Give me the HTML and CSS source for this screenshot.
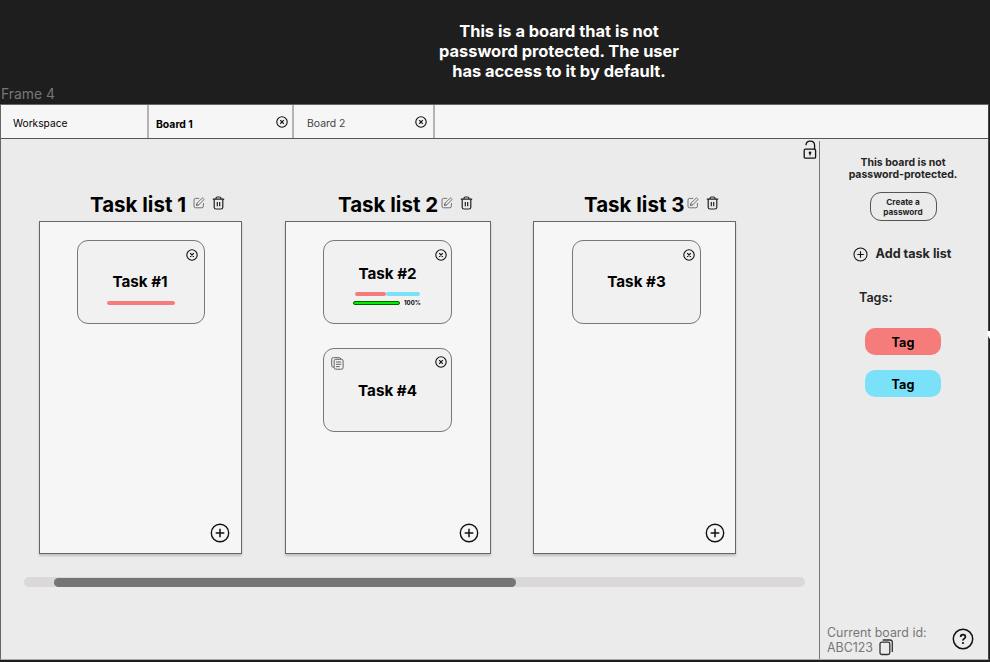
FILE: index.html
```html
<!DOCTYPE html>
<html lang="en">
<head>
<meta charset="utf-8">
<title>Board 1</title>
<link rel="stylesheet" href="styles.css">
</head>
<body>
<svg class="sprite" aria-hidden="true">
  <symbol id="close" viewBox="0 0 12 12"><circle cx="6" cy="6" r="5.2" fill="none" stroke="currentColor" stroke-width="1.1"/><path d="M4.2 4.2l3.6 3.6M7.8 4.2L4.2 7.8" stroke="currentColor" stroke-width="1.2"/></symbol>
  <symbol id="plus" viewBox="0 0 20 20"><circle cx="10" cy="10" r="8.7" fill="none" stroke="currentColor" stroke-width="1.4"/><path d="M10 5.7v8.6M5.7 10h8.6" stroke="currentColor" stroke-width="1.5"/></symbol>
  <symbol id="edit" viewBox="0 0 12 12"><path d="M6.200 1.400H2.600Q1 1.400 1 3v6.200Q1 10.800 2.600 10.800h6.200q1.600 0 1.600-1.600V6" fill="none" stroke="currentColor" stroke-width=".8"/><path d="M3.300 8.600l.5-2.200L9.400.9l1.700 1.600-5.500 5.500zM3.800 6.400l1.800 1.600" fill="none" stroke="currentColor" stroke-width=".8"/></symbol>
  <symbol id="trash" viewBox="0 0 13 14"><path d="M.8 3.200h11.400M4 3V2.200Q4.200 1 5.300 1h2.400Q8.800 1 9 2.200V3M2.200 3.200v8q0 1.800 1.800 1.800h5q1.800 0 1.800-1.800v-8M5.300 6v4.300M7.700 6v4.300" fill="none" stroke="currentColor" stroke-width="1.200"/></symbol>
</svg>
<p class="caption">This is a board that is not<br>password protected. The user<br>has access to it by default.</p>
<p class="frame-label">Frame 4</p>
<div class="frame">
  <nav class="tabs">
    <div class="tab tab-home"><span>Workspace</span></div>
    <div class="tab tab-active"><span>Board 1</span><svg class="close"><use href="#close"/></svg></div>
    <div class="tab tab-second"><span>Board 2</span><svg class="close"><use href="#close"/></svg></div>
  </nav>
  <div class="body">
    <main>
      <svg class="lock" viewBox="0 0 14 20"><rect x="1.200" y="9.200" width="11.400" height="9" rx="1.300" fill="none" stroke="#111" stroke-width="1.300"/><path d="M3 5.300C3 2.500 4.800 1.100 7.200 1.100s4.400 1.600 4.400 4.300v3.800" fill="none" stroke="#111" stroke-width="1.300"/><circle cx="7" cy="12.800" r="1.300" fill="#111"/><path d="M7 13v2.600" stroke="#111" stroke-width="1.200"/></svg>
      <div class="columns">
        <section class="column column-1">
          <header><h2>Task list 1</h2><svg class="edit"><use href="#edit"/></svg><svg class="trash"><use href="#trash"/></svg></header>
          <div class="list">
            <article class="card"><svg class="close"><use href="#close"/></svg><h3>Task #1</h3><div class="stripe stripe-single"></div></article>
            <svg class="add"><use href="#plus"/></svg>
          </div>
        </section>
        <section class="column column-2">
          <header><h2>Task list 2</h2><svg class="edit"><use href="#edit"/></svg><svg class="trash"><use href="#trash"/></svg></header>
          <div class="list">
            <article class="card card-progress"><svg class="close"><use href="#close"/></svg><h3>Task #2</h3>
              <div class="stripes"><div class="stripe"></div><div class="stripe stripe-blue"></div></div>
              <div class="progress"><div class="bar"></div><span>100%</span></div>
            </article>
            <article class="card card-copy"><svg class="notes" viewBox="0 0 13 13"><path d="M3 10.200H2.300Q.7 10.200.7 8.600V2.200Q.7.700 2.300.7h6Q9.600.7 9.800 2" fill="none" stroke="#555" stroke-width=".9"/><rect x="3.200" y="2.300" width="8.900" height="9.900" rx="1.500" fill="none" stroke="#555" stroke-width=".9"/><path d="M5 5h5.200M5 7.300h5.200M5 9.600h3.700" stroke="#555" stroke-width=".9"/></svg><svg class="close"><use href="#close"/></svg><h3>Task #4</h3></article>
            <svg class="add"><use href="#plus"/></svg>
          </div>
        </section>
        <section class="column column-3">
          <header><h2>Task list 3</h2><svg class="edit"><use href="#edit"/></svg><svg class="trash"><use href="#trash"/></svg></header>
          <div class="list">
            <article class="card"><svg class="close"><use href="#close"/></svg><h3>Task #3</h3></article>
            <svg class="add"><use href="#plus"/></svg>
          </div>
        </section>
      </div>
      <div class="scroll"><div class="thumb"></div></div>
    </main>
    <aside>
      <p class="notice">This board is not<br>password-protected.</p>
      <button class="create">Create a<br>password</button>
      <div class="add-list"><svg><use href="#plus"/></svg><span>Add task list</span></div>
      <p class="tags-title">Tags:</p>
      <div class="tag">Tag</div>
      <div class="tag tag-blue">Tag</div>
      <footer>
        <div class="board-id"><div>Current board id:</div><div class="id-row"><span>ABC123</span><svg class="copy" viewBox="0 0 15 17"><rect x="1" y="3.200" width="9.800" height="12.300" rx="1.800" fill="none" stroke="#333" stroke-width="1.300"/><path d="M3.700 1H11q2.300 0 2.300 2.300v9.800" fill="none" stroke="#333" stroke-width="1.300"/></svg></div></div>
        <svg class="help" viewBox="0 0 22 22"><circle cx="11" cy="11" r="9.700" fill="none" stroke="#111" stroke-width="1.500"/><path d="M8.600 9Q8.600 6.600 11 6.600T13.400 8.700Q13.400 10 12.100 10.700T11 12.600" fill="none" stroke="#111" stroke-width="1.700"/><circle cx="11" cy="15" r="1.100" fill="#111"/></svg>
      </footer>
    </aside>
  </div>
</div>
<svg class="cursor" viewBox="0 0 3 10"><path d="M3 0H1L0 2l1.500 4L3 8z" fill="#fff"/></svg>
</body>
</html>
```
FILE: styles.css
```css
* { box-sizing: border-box; }
body { margin: 0; width: 990px; height: 662px; overflow: hidden; background: #1e1e1e; font-family: Inter, sans-serif; color: #000; }
p, h2, h3 { margin: 0; }
svg { display: block; flex: none; }
.sprite { position: absolute; width: 0; height: 0; }
.caption { width: 240px; margin: 0 0 0 439px; padding-top: 21px; height: 82px; color: #fff; font-size: 16.4px; line-height: 20px; font-weight: 650; text-align: center; white-space: nowrap; }
.frame-label { height: 22px; padding-left: 1px; color: #777; font-size: 13.900px; line-height: 24px; }
.frame { width: 989px; height: 556px; background: #ebebeb; border: 1px solid #666; border-right-color: #444; border-bottom-color: #aaa; display: flex; flex-direction: column; }
.tabs { flex: none; display: flex; height: 34px; background: #f6f6f6; border-bottom: 1px solid #555; }
.tab { display: flex; justify-content: space-between; font-size: 10.400px; line-height: 14px; padding-top: 11px; border-right: 2px solid #b4b4b4; }
.tab-home { width: 148px; padding-left: 12px; font-size: 10.200px; }
.tab-active { width: 145px; padding-left: 7px; padding-right: 4px; }
.tab-active span { padding-top: 2px; font-weight: 700; font-size: 10.400px; }
.tab-second { width: 141px; padding-left: 13px; padding-right: 6px; color: #444; }
.tab-second span { padding-top: 1px; }
.close { width: 12px; height: 12px; color: #111; }
.body { display: grid; grid-template-columns: 818px 1fr; flex: 1; min-height: 0; }
main { padding: 1px 14px 0 23px; display: flex; flex-direction: column; }
.lock { width: 14px; height: 20px; margin: 0 -12px 0 auto; }
.columns { display: flex; padding-left: 15px; margin-top: 31px; }
.column { width: 203px; }
.column-2 { width: 206px; margin-left: 43px; }
.column-3 { margin-left: 42px; }
.column header { display: flex; height: 30px; padding-left: 51px; }
.column-2 header { padding-left: 53px; }
h2 { width: 98px; font-size: 20.500px; line-height: 28px; font-weight: 700; white-space: nowrap; }
.column-2 h2, .column-3 h2 { width: 100px; }
.edit { width: 12px; height: 12px; color: #555; margin: 6px 0 0 5px; }
.column-2 .edit, .column-3 .edit { margin-left: 3px; }
.trash { width: 13px; height: 14px; color: #222; margin: 5px 0 0 6.500px; }
.column-2 .trash, .column-3 .trash { margin-left: 7px; }
.list { height: 333px; display: flex; flex-direction: column; padding: 18px 11px 10px 37px; background: #f6f6f6; border: 1px solid #666; box-shadow: 0 2px 2px rgba(0,0,0,.18); }
.column-3 .list { padding-left: 38px; padding-right: 10px; }
.card { display: flex; flex-direction: column; align-items: center; position: relative; flex: none; width: 129px; height: 84px; border: 1px solid #777; border-radius: 11px; background: #f1f1f1; }
.column-1 .card { width: 128px; }
.card .close { position: absolute; top: 8px; right: 6px; }
.column-2 .card .close { right: 4px; }
.column-3 .card .close { right: 5px; }
.card.card-copy .close { top: 7px; }
.notes { position: absolute; left: 7px; top: 8px; width: 13px; height: 13px; }
.card h3 { margin-top: 31px; font-size: 15.200px; line-height: 20px; font-weight: 700; }
.card-progress h3 { margin-top: 23px; }
.card.card-copy h3 { margin-top: 32px; }
.column-1 .card h3 { margin: 31px 2px 0 0; }
.card-copy { margin-top: 24px; }
.stripe { height: 4px; width: 31px; border-radius: 2px; background: #f67c7c; }
.stripe-single { width: 68px; margin-top: 9px; }
.stripe-blue { width: 34px; background: #7be1f8; }
.stripes { display: flex; margin: 8px 1px 0 0; }
.progress { display: flex; align-items: center; align-self: flex-start; margin: 3px 0 0 29px; gap: 4px; height: 7px; font-size: 6px; line-height: 7px; font-weight: 700; }
.bar { width: 47px; height: 4px; background: #00f000; border: 1px solid #075e07; border-radius: 2px; }
.add { width: 20px; height: 20px; margin: auto 0 0 auto; color: #111; }
.scroll { width: 781px; height: 10px; margin-top: 23px; padding-left: 30px; border-radius: 5px; background: #dad8d8; }
.thumb { width: 462px; height: 9px; border-radius: 5px; background: #757575; transform: translateY(1px); }
aside { margin-top: 2px; padding-right: 2px; border-left: 1px solid #777; display: flex; flex-direction: column; align-items: center; color: #252525; font-weight: 600; }
.notice { margin-top: 16px; font-size: 10.500px; line-height: 12px; text-align: center; white-space: nowrap; font-weight: 650; }
.create { width: 67px; height: 29px; margin-top: 11px; padding: 0; font: 650 8.200px/10px Inter, sans-serif; color: #252525; background: none; border: 1px solid #555; border-radius: 11px; }
.add-list { display: flex; align-items: center; gap: 8px; margin: 23px 2px 0 0; font-size: 12.600px; line-height: 20px; font-weight: 650; }
.add-list svg { width: 15px; height: 15px; color: #111; }
.tags-title { align-self: flex-start; margin: 24px 0 0 39px; font-size: 12.600px; line-height: 20px; }
.tag { width: 76px; height: 27px; margin-top: 20px; border-radius: 10px; background: #f67c7c; color: #000; font-size: 12.600px; line-height: 29px; font-weight: 700; text-align: center; }
.tag-blue { margin-top: 15px; background: #7be1f8; }
footer { display: flex; justify-content: space-between; align-self: stretch; margin-top: auto; padding: 0 12px 3px 7px; color: #777; font-size: 12.400px; line-height: 15px; font-weight: 400; }
.id-row { display: flex; gap: 6px; }
.copy { width: 15px; height: 17px; margin-top: -1px; }
.help { width: 22px; height: 22px; margin-top: 3px; }
.cursor { position: absolute; left: 987px; top: 331px; width: 3px; height: 10px; }
```
